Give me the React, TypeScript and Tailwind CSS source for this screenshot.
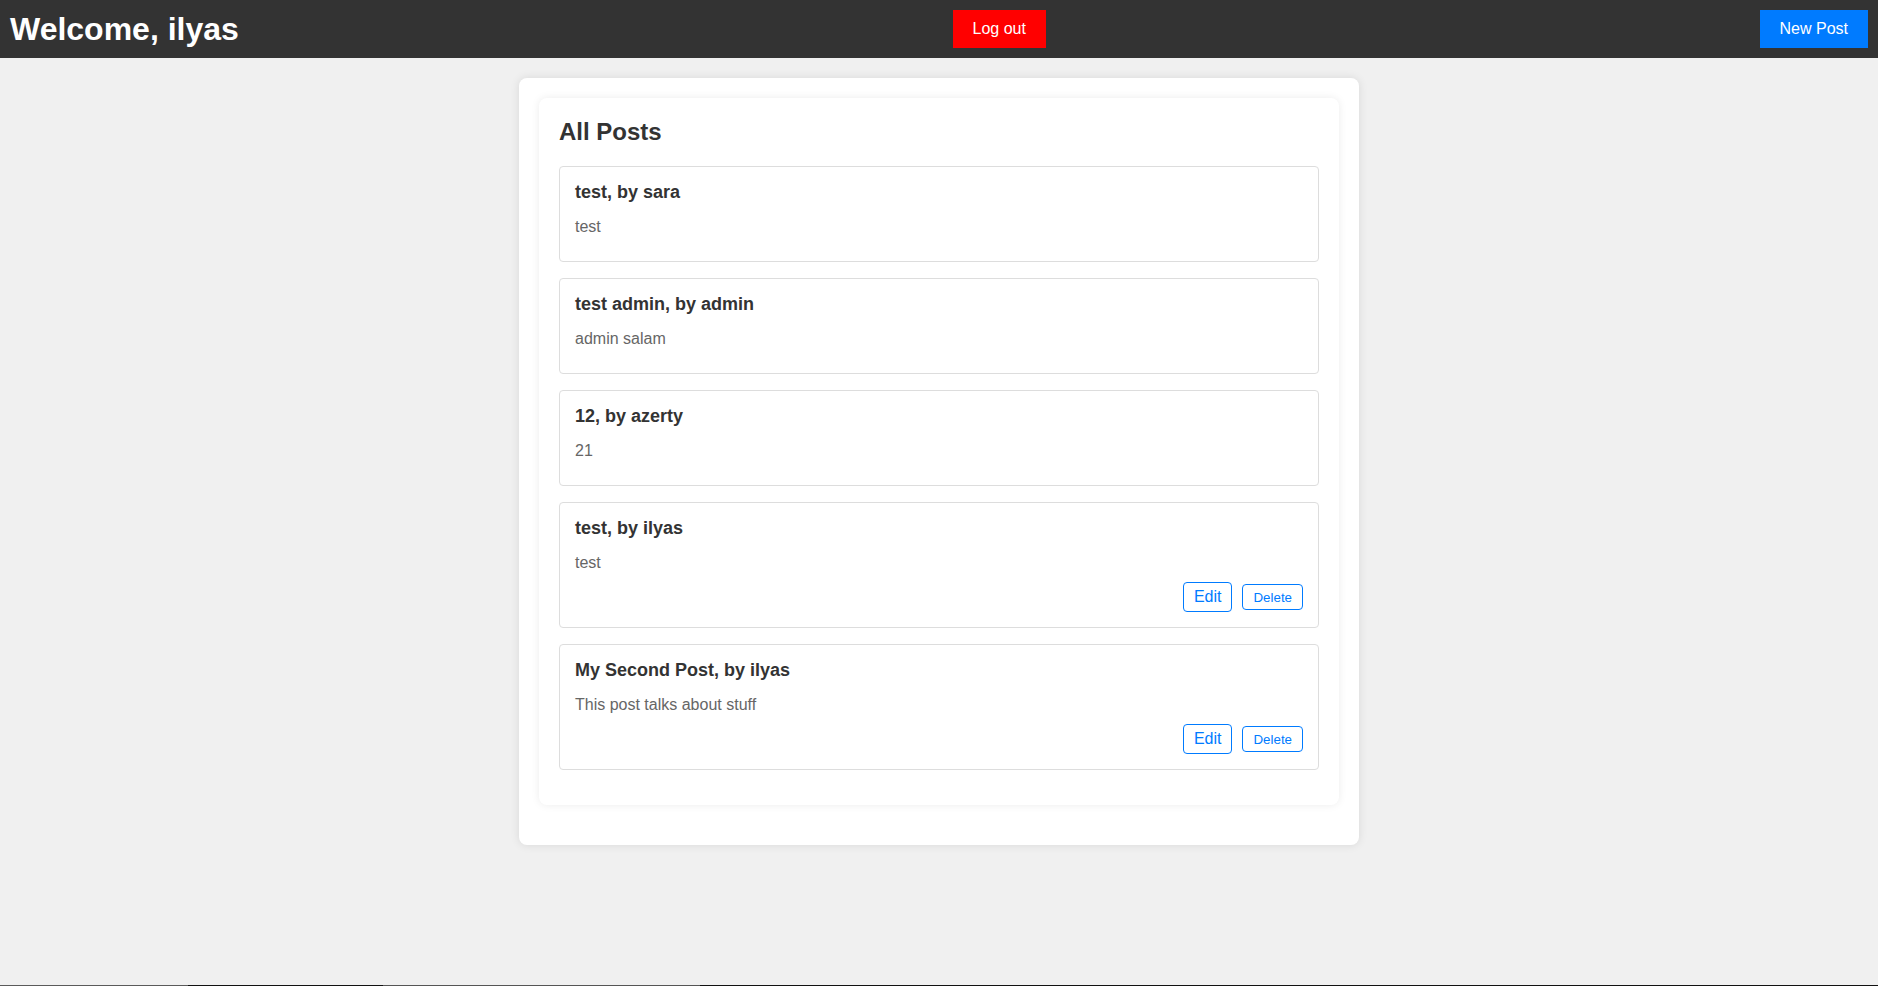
import React from "react";

type Post = { title: string; author: string; body: string; mine: boolean };

const posts: Post[] = [
  { title: "test", author: "sara", body: "test", mine: false },
  { title: "test admin", author: "admin", body: "admin salam", mine: false },
  { title: "12", author: "azerty", body: "21", mine: false },
  { title: "test", author: "ilyas", body: "test", mine: true },
  { title: "My Second Post", author: "ilyas", body: "This post talks about stuff", mine: true },
];

function PostItem({ post }: { post: Post }) {
  return (
    <div className="rounded-[4px] border border-[#ddd] p-[15px]">
      <h3 className="mb-[15px] text-[18px] font-bold leading-[normal] text-[#333]">
        {post.title}, by {post.author}
      </h3>
      <p className="mb-[10px] text-[16px] leading-[normal] text-[#666]">{post.body}</p>
      {post.mine && (
        <div className="flex items-center justify-end gap-[10px]">
          <button className="rounded-[4px] border border-[#007bff] bg-white px-[10px] py-[5px] text-[16px] leading-[normal] text-[#007bff]">
            Edit
          </button>
          <button className="rounded-[4px] border border-[#007bff] bg-white px-[10px] py-[4.5px] text-[13.33px] leading-[normal] text-[#007bff]">
            Delete
          </button>
        </div>
      )}
    </div>
  );
}

export default function App() {
  return (
    <div
      className="flex min-h-screen flex-col bg-[#f0f0f0]"
      style={{ fontFamily: '"Liberation Sans", Arial, sans-serif' }}
    >
      <header className="flex items-center justify-between bg-[#333] p-[10px] text-white">
        <h1 className="m-0 text-[32px] font-bold leading-[normal]">Welcome, ilyas</h1>
        <button className="bg-[#ff0000] px-[20px] py-[10px] text-[16px] leading-[normal] text-white">
          Log out
        </button>
        <button className="bg-[#007bff] px-[20px] py-[10px] text-[16px] leading-[normal] text-white">
          New Post
        </button>
      </header>

      <main className="mx-auto mt-[20px] w-[840px] rounded-[8px] bg-white p-[20px] shadow-[0_0_10px_rgba(0,0,0,0.1)]">
        <div className="mb-[20px] rounded-[8px] bg-white px-[20px] pt-[20px] pb-[35px] shadow-[0_0_8px_rgba(0,0,0,0.08)]">
          <h2 className="mb-[20px] text-[24px] font-bold leading-[normal] text-[#333]">All Posts</h2>
          <div className="flex flex-col gap-[16px]">
            {posts.map((p, i) => (
              <PostItem key={i} post={p} />
            ))}
          </div>
        </div>
      </main>

      <div className="mt-auto flex h-[1px]">
        <div className="w-[188px] bg-[#5a5a5a]" />
        <div className="w-[195px] bg-[#111]" />
        <div className="w-[317px] bg-[#555]" />
        <div className="flex-1 bg-[#111]" />
      </div>
    </div>
  );
}
